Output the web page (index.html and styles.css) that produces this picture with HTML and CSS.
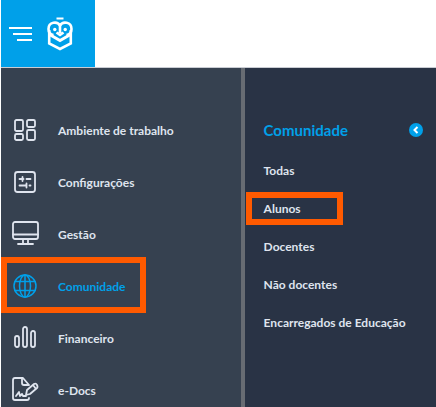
FILE: index.html
```
<!DOCTYPE html>
<html lang="pt">
<head>
    <meta charset="UTF-8">
    <meta name="viewport" content="width=device-width, initial-scale=1.0">
    <title>Comunidade</title>
    <link rel="stylesheet" href="styles.css">
</head>
<body>
    <header class="topbar">
        <div class="brand">
            <button class="menu-button" type="button" aria-label="Menu">
                <svg width="24" height="16" viewBox="0 0 24 16" fill="#fff">
                    <path d="M0 1h23v2H0zM4 7h19v2H4zM8 13h15v2H8z"/>
                </svg>
            </button>
            <svg class="logo" width="26" height="34" viewBox="0 0 26 34" fill="none" stroke="#fff">
                <path d="M9.500 1.500h7" stroke-width="2"/>
                <path d="M2.200 13v13.500L13 32l10.800-5.500V13" stroke-width="2.600"/>
                <path d="M2.500 17.500L13 23.500l10.500-6" stroke-width="3"/>
                <path d="M13 8.500C10.500 4 1.500 4.500 1.500 12c0 3.500 2 5.500 5 6M13 8.500c2.500-4.500 11.500-4 11.500 3.500 0 3.500-2 5.500-5 6" stroke-width="2.600"/>
                <path d="M13 8v8M9.500 15.500L13 18l3.500-2.500" stroke-width="2.600"/>
                <circle cx="7.800" cy="12.500" r="1.700" fill="#fff" stroke="none"/>
                <circle cx="18.200" cy="12.500" r="1.700" fill="#fff" stroke="none"/>
            </svg>
        </div>
    </header>

    <div class="layout">
        <nav class="sidebar" aria-label="Menu principal">
            <a class="nav-item" href="#">
                <svg class="icon" viewBox="0 0 28 28">
                    <rect x="4" y="4" width="8" height="11" rx="1.500"/>
                    <rect x="16" y="4" width="8" height="7" rx="1.500"/>
                    <rect x="4" y="18" width="8" height="6" rx="1.500"/>
                    <rect x="16" y="14" width="8" height="10" rx="1.500"/>
                </svg>
                <span>Ambiente de trabalho</span>
            </a>
            <a class="nav-item" href="#">
                <svg class="icon" viewBox="0 0 28 28">
                    <rect x="4" y="4" width="20" height="20" rx="2.500"/>
                    <path d="M8.500 11h4M11.500 9v4M15.500 11h4M8.500 17.500h6M15.500 15.500v4M18.500 17.500h1"/>
                </svg>
                <span>Configurações</span>
            </a>
            <a class="nav-item" href="#">
                <svg class="icon" viewBox="0 0 28 28">
                    <rect x="2" y="2" width="25" height="17" rx="2"/>
                    <path d="M2 14.500h25M12 19v4M17 19v4M7 24h15"/>
                </svg>
                <span>Gestão</span>
            </a>
            <a class="nav-item active" href="#">
                <svg class="icon" viewBox="0 0 28 28">
                    <circle cx="14" cy="14" r="11"/>
                    <ellipse cx="14" cy="14" rx="5.500" ry="11"/>
                    <path d="M14 3v22M4 9.500h20M4 18.500h20"/>
                </svg>
                <span>Comunidade</span>
            </a>
            <a class="nav-item" href="#">
                <svg class="icon" viewBox="0 0 28 28">
                    <rect x="4" y="12" width="4" height="11" rx="2"/>
                    <rect x="12" y="3" width="4" height="20" rx="2"/>
                    <rect x="20" y="7" width="4" height="16" rx="2"/>
                </svg>
                <span>Financeiro</span>
            </a>
            <a class="nav-item" href="#">
                <svg class="icon" viewBox="0 0 28 28">
                    <path d="M18 9l-6-7H4Q2 2 2 4v18q0 2 2 2h12q2 0 2-2M11 2v5q0 2 2 2h5"/>
                    <path d="M15 19l1-5 7-6q2-1 3 1t0 3l-7 6zM22 9l3 4"/>
                    <path d="M5 20l3-4 1 4 2-2 1 2h3"/>
                </svg>
                <span>e-Docs</span>
            </a>
        </nav>

        <section class="submenu">
            <div class="submenu-head">
                <h2>Comunidade</h2>
                <button class="collapse" type="button" aria-label="Recolher">
                    <svg width="14" height="14" viewBox="0 0 14 14" fill="none" stroke="#fff" stroke-width="2">
                        <path d="M8.500 4L5.500 7l3 3"/>
                    </svg>
                </button>
            </div>
            <ul class="submenu-list">
                <li><a href="#">Todas</a></li>
                <li class="marked"><a href="#">Alunos</a></li>
                <li><a href="#">Docentes</a></li>
                <li><a href="#">Não docentes</a></li>
                <li><a href="#">Encarregados de Educação</a></li>
            </ul>
        </section>
    </div>
</body>
</html>
```
FILE: styles.css
```
*,
*::after {
    box-sizing: border-box;
}
body {
    display: flex;
    flex-direction: column;
    min-height: 100vh;
    margin: 0;
    padding-left: 1px;
    background: #fff;
    font-family: Lato, sans-serif;
    font-size: 12px;
    font-weight: bold;
    line-height: 18px;
}
a {
    color: inherit;
    text-decoration: none;
}
button {
    padding: 0;
    border: none;
    background: none;
    cursor: pointer;
}
svg {
    display: block;
}
.topbar {
    display: flex;
    border-bottom: 1px solid #c9ccd3;
}
.brand {
    display: flex;
    align-items: center;
    gap: 14px;
    height: 67px;
    padding: 0 22px 0 8px;
    background: #00a0e9;
}
.layout {
    display: flex;
    flex: 1;
}
.sidebar {
    flex: 0 0 56%;
    padding-top: 36px;
    border-right: 4px solid #676c73;
    background: #364150;
    color: #dfe4ee;
}
.nav-item {
    position: relative;
    display: flex;
    align-items: center;
    gap: 19px;
    height: 52px;
    padding-left: 10px;
}
.nav-item span {
    padding-top: 2px;
}
.icon {
    width: 28px;
    height: 28px;
    fill: none;
    stroke: currentColor;
    stroke-width: 1.8;
    stroke-linecap: round;
    stroke-linejoin: round;
}
.active {
    color: #00a0e9;
}
.active .icon {
    stroke-width: 1.5;
}
/* orange frames drawn over the rows */
.active::after,
.marked::after {
    content: "";
    position: absolute;
    border: 6px solid #ff5a00;
    pointer-events: none;
}
.active::after {
    top: -3px;
    bottom: -1px;
    left: 0;
    width: 145px;
}
.submenu {
    flex: 1;
    padding: 52px 13px 0 19px;
    background: #293345;
    color: #dfe4ee;
}
.submenu-head {
    display: flex;
    align-items: center;
    justify-content: space-between;
    margin-bottom: 12px;
}
.submenu-head h2 {
    margin: 0;
    color: #00a0e9;
    font-size: 15px;
    font-weight: bold;
    line-height: 20px;
}
.collapse {
    border-radius: 50%;
    background: #00a0e9;
}
.submenu-list {
    margin: 0;
    padding: 0;
    list-style: none;
}
.submenu-list li {
    position: relative;
    padding: 10px 0;
}
.marked::after {
    top: 2px;
    bottom: 3px;
    left: -18px;
    width: 97px;
}
```
